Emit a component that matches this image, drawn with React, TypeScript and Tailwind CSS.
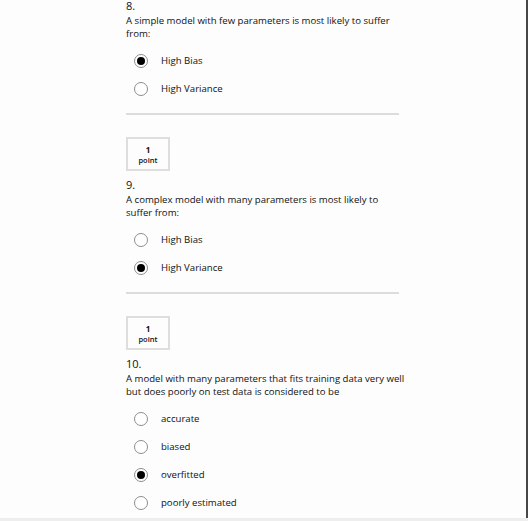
const questions = [
  {
    num: '8.',
    text: 'A simple model with few parameters is most likely to suffer from:',
    options: ['High Bias', 'High Variance'],
    selected: 0,
    points: false,
  },
  {
    num: '9.',
    text: 'A complex model with many parameters is most likely to suffer from:',
    options: ['High Bias', 'High Variance'],
    selected: 1,
    points: true,
  },
  {
    num: '10.',
    text: 'A model with many parameters that fits training data very well but does poorly on test data is considered to be',
    options: ['accurate', 'biased', 'overfitted', 'poorly estimated'],
    selected: 2,
    points: true,
  },
];

const Radio = ({ checked }: { checked: boolean }) => (
  <span className="flex h-[14px] w-[14px] items-center justify-center rounded-full border border-[#8d8d8d] bg-white">
    {checked && <span className="h-[8px] w-[8px] rounded-full bg-black" />}
  </span>
);

const App = () => {
  return (
    <div
      className="flex h-[521px] w-[528px] flex-col overflow-hidden bg-[#fdfdfd] text-[#111111]"
      style={{ fontFamily: '"Open Sans", "Liberation Sans", sans-serif' }}
    >
      <div className="flex min-h-0 flex-1">
        <div className="flex-1 overflow-hidden pl-[126px] pt-[1px]">
          <div className="w-[280px]">
            {questions.map((q, qi) => (
              <div key={q.num}>
                {q.points && (
                  <div className="flex h-[34px] w-[44px] flex-col items-center justify-center border-2 border-[#dedede] pt-[1px]">
                    <span className="text-[8px] font-bold leading-[11px]">1</span>
                    <span className="text-[7.5px] font-semibold leading-[10px]">point</span>
                  </div>
                )}
                <div
                  className={`text-[11px] font-medium ${
                    qi === 0 ? 'mb-[3px] leading-[10px]' : 'mt-[5px] leading-[17px]'
                  }`}
                >
                  {q.num}
                </div>
                <p className="text-[9.6px] font-medium leading-[13px]">{q.text}</p>
                <div className="mt-[7px] flex flex-col">
                  {q.options.map((o, oi) => (
                    <label key={o} className="flex h-[28px] items-center">
                      <span className="ml-[8px]">
                        <Radio checked={oi === q.selected} />
                      </span>
                      <span className="ml-[13px] text-[9.6px] font-medium">{o}</span>
                    </label>
                  ))}
                </div>
                {qi < questions.length - 1 && (
                  <div className="mt-[10px] mb-[22px] h-[2px] w-[273px] bg-[#dcdcdc]" />
                )}
              </div>
            ))}
          </div>
        </div>
        <div className="w-[2px] bg-[#474747]" />
      </div>
      <div className="h-[3px] bg-[#eeeeee]" />
    </div>
  );
};

export default App;
